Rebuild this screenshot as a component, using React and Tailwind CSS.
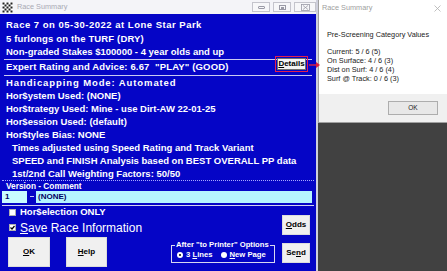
import React from "react";

function AppIcon() {
  return (
    <svg width="11" height="11" viewBox="0 0 11 11">
      <rect x="0" y="0" width="11" height="11" fill="#fff" />
      {[0, 1, 2, 3, 4].map((r) =>
        [0, 1, 2, 3, 4].map((c) =>
          (r + c) % 2 === 0 ? (
            <rect key={r + "-" + c} x={0.5 + c * 2} y={0.5 + r * 2} width="2" height="2" fill="#222" />
          ) : null
        )
      )}
    </svg>
  );
}

function TitleButton({ w, children }) {
  return (
    <div
      className="h-[10px] flex items-center justify-center border border-[#c4c4cc] bg-[#f7f7f9]"
      style={{ width: w }}
    >
      {children}
    </div>
  );
}

function Line({ children, className = "" }) {
  return <div className={"h-[13px] leading-[13px] whitespace-nowrap " + className}>{children}</div>;
}

function WinButton({ children, className = "" }) {
  return (
    <div
      className={
        "flex items-center justify-center bg-[#f0f0f0] border border-[#dcdcdc] text-black font-bold text-[8px] " +
        className
      }
    >
      {children}
    </div>
  );
}

export default function App() {
  return (
    <div className="flex w-[447px] h-[271px] overflow-hidden bg-[#414141] font-['Liberation_Sans',Arial,sans-serif]">
      {/* Left window */}
      <div className="w-[318px] h-full flex flex-col shrink-0 bg-[#0505c6] border-r-2 border-[#cfd0dc]">
        {/* Title bar */}
        <div className="h-[14px] flex items-center bg-[#f4f4f8] pl-[2px] pr-0">
          <AppIcon />
          <span className="ml-[4px] text-[7.3px] text-[#a9a9b4] whitespace-nowrap">Race Summary</span>
          <div className="ml-auto flex gap-[3px] items-center">
            <TitleButton w={18}>
              <div className="w-[7px] h-[3px] border border-[#9a9aa6] rounded-[1px]" />
            </TitleButton>
            <TitleButton w={18}>
              <div className="w-[7px] h-[5px] border border-[#9a9aa6] flex items-end justify-center">
                <div className="w-[3px] h-[2px] bg-[#9a9aa6]" />
              </div>
            </TitleButton>
            <TitleButton w={22}>
              <svg width="9" height="7" viewBox="0 0 9 7">
                <rect x="0.5" y="0.5" width="8" height="6" fill="none" stroke="#9a9aa6" strokeWidth="0.8" />
                <path d="M2 1.5 L7 5.5 M7 1.5 L2 5.5" stroke="#9a9aa6" strokeWidth="0.8" />
              </svg>
            </TitleButton>
          </div>
        </div>

        {/* Body */}
        <div className="flex-1 flex flex-col text-white font-bold text-[9.5px]">
          <div className="pt-[4px] px-[6px]">
            <div className="h-[13.5px] leading-[13.5px] whitespace-nowrap tracking-[0.5px]">Race 7 on 05-30-2022 at Lone Star Park</div>
            <div className="h-[13.5px] leading-[13.5px] whitespace-nowrap tracking-[0.15px]">5 furlongs on the TURF (DRY)</div>
            <div className="h-[13.5px] leading-[13.5px] whitespace-nowrap">Non-graded Stakes $100000 - 4 year olds and up</div>
          </div>
          <div className="mx-[4px] h-px bg-[#c9c9f2]" />
          <div className="relative h-[15px] flex items-center px-[6px] whitespace-nowrap tracking-[0.15px]">
            Expert Rating and Advice: 6.67&nbsp; "PLAY" (GOOD)
            <div className="absolute right-[8px] top-[-3.5px] flex items-center tracking-normal">
              <div className="w-[33px] h-[16px] border-[1.5px] border-[#e02050] flex items-center justify-center">
                <div className="w-[29px] h-[12px] bg-[#f4f4f4] border border-[#707070] flex items-center justify-center text-black text-[8px] font-bold">
                  <span className="underline">D</span>etails
                </div>
              </div>
            </div>
            <svg className="absolute left-[309px] top-[1px] overflow-visible" width="12" height="8" viewBox="0 0 12 8">
              <path d="M0 4 L8 4" stroke="#e02040" strokeWidth="1.4" />
              <path d="M7 1 L11 4 L7 7 Z" fill="#e02040" />
            </svg>
          </div>
          <div className="mx-[4px] h-px bg-[#c9c9f2]" />
          <div className="px-[6px]">
            <Line className="tracking-[0.9px]">Handicapping Mode: Automated</Line>
            <Line>Hor$ystem Used: (NONE)</Line>
            <Line>Hor$trategy Used: Mine - use Dirt-AW 22-01-25</Line>
            <Line>Hor$ession Used: (default)</Line>
            <Line>Hor$tyles Bias: NONE</Line>
            <Line className="pl-[6px]">Times adjusted using Speed Rating and Track Variant</Line>
            <Line className="pl-[6px]">SPEED and FINISH Analysis based on BEST OVERALL PP data</Line>
            <Line className="pl-[6px]">1st/2nd Call Weighting Factors: 50/50</Line>
          </div>
          <div className="mx-[2px] border-t border-dotted border-[#a8a8ff]" />
          <div className="h-[10px] leading-[10px] text-[8.3px] pl-[6px] whitespace-nowrap">Version - Comment</div>
          <div className="h-[12px] flex mx-[2px] mr-[4px] text-[8px] text-[#000060]">
            <div className="w-[25px] bg-[#c8fcff] pl-[3px] leading-[12px]">1</div>
            <div className="w-[9px] flex items-center justify-center">
              <div className="w-[4px] h-px bg-[#c8c8f0]" />
            </div>
            <div className="flex-1 bg-[#b5f5ff] pl-[2px] leading-[12px]">(NONE)</div>
          </div>
          <div className="h-[2px]" />
          <div className="mx-[2px] h-px bg-[#d0d0f0]" />

          {/* Bottom area */}
          <div className="flex-1 flex pr-[6px]">
            <div className="flex-1 flex flex-col">
              <div className="h-[14px] flex items-center pl-[9px] gap-[4px] whitespace-nowrap">
                <div className="w-[7px] h-[7px] bg-white border border-[#b0b0b0]" />
                <span>Hor$election ONLY</span>
              </div>
              <div className="h-[16px] flex items-center pl-[9px] gap-[4px] whitespace-nowrap">
                <div className="w-[7px] h-[7px] bg-white border border-[#b0b0b0] flex items-center justify-center">
                  <svg width="5" height="5" viewBox="0 0 5 5">
                    <path d="M0.5 2.5 L2 4 L4.5 1" stroke="#000" strokeWidth="1.2" fill="none" />
                  </svg>
                </div>
                <span className="font-normal text-[12px]">
                  <span className="underline">S</span>ave Race Information
                </span>
              </div>
              <div className="mt-[1px] flex pl-[8px] gap-[16px]">
                <WinButton className="w-[42px] h-[30px]">
                  <span className="underline">O</span>K
                </WinButton>
                <WinButton className="w-[41px] h-[30px]">
                  <span className="underline">H</span>elp
                </WinButton>
              </div>
            </div>
            <div className="self-end mb-[8px] mr-[7px] relative w-[104px] h-[18px] border border-[#d8d8f0] text-[7.7px]">
              <div className="absolute -top-[6px] left-[3px] bg-[#0505c6] px-[1px] leading-[10px] whitespace-nowrap">
                After "to Printer" Options
              </div>
              <div className="h-full flex items-center pl-[5px] pt-[2px] whitespace-nowrap">
                <div className="w-[6px] h-[6px] rounded-full bg-white flex items-center justify-center">
                  <div className="w-[2px] h-[2px] rounded-full bg-black" />
                </div>
                <span className="ml-[3px]">
                  3 <span className="underline">L</span>ines
                </span>
                <div className="ml-[8px] w-[6px] h-[6px] rounded-full bg-white" />
                <span className="ml-[3px]">
                  <span className="underline">N</span>ew Page
                </span>
              </div>
            </div>
            <div className="flex flex-col pt-[9px] gap-[8px]">
              <WinButton className="w-[28px] h-[20px]">
                <span className="underline">O</span>dds
              </WinButton>
              <WinButton className="w-[28px] h-[20px]">
                Se<span className="underline">n</span>d
              </WinButton>
            </div>
          </div>
        </div>
      </div>

      {/* Right dialog + dark background */}
      <div className="flex-1 flex flex-col">
        <div className="h-[123px] flex flex-col bg-white border-l border-b border-[#a0a0a0]">
          <div className="h-[16px] flex items-center justify-between pl-[3px] pr-[6px] text-[7.3px] text-[#a0a0a0]">
            <span>Race Summary</span>
            <svg width="7" height="7" viewBox="0 0 7 7">
              <path d="M0.5 0.5 L6.5 6.5 M6.5 0.5 L0.5 6.5" stroke="#b0b0b0" strokeWidth="0.8" />
            </svg>
          </div>
          <div className="flex-1 pl-[8px] pt-[14px] text-[7.3px] leading-[9px] text-[#222] whitespace-nowrap">
            <div>Pre-Screening Category Values</div>
            <div className="h-[8px]" />
            <div>Current: 5 / 6 (5)</div>
            <div>On Surface: 4 / 6 (3)</div>
            <div>Dist on Surf: 4 / 6 (4)</div>
            <div>Surf @ Track: 0 / 6 (3)</div>
          </div>
          <div className="h-[28px] bg-[#f0f0f0] flex items-center justify-end pr-[9px]">
            <div className="w-[50px] h-[14px] bg-[#e8e8e8] border border-[#adadad] flex items-center justify-center text-[6.5px] text-[#222]">
              OK
            </div>
          </div>
        </div>
        <div className="flex-1 bg-[#414141]" />
      </div>
    </div>
  );
}
